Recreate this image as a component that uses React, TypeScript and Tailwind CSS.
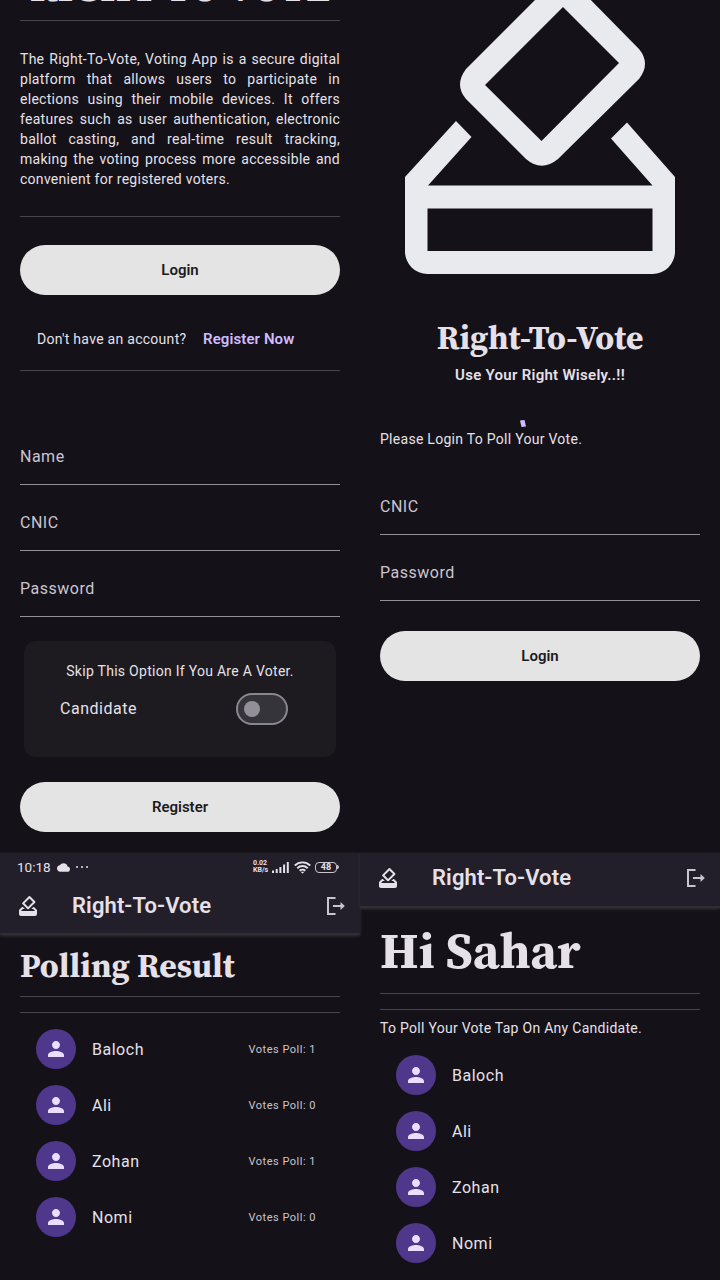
import { MdHowToVote, MdPerson, MdCloud } from "react-icons/md";

const serif = "font-['Source_Serif_4','Source_Serif_Pro','Liberation_Serif',serif] font-bold text-[#e6e0e9]";

function Rule({ className = "" }: { className?: string }) {
  return <div className={`h-px bg-[#48454e] ${className}`} />;
}

function PillButton({ label }: { label: string }) {
  return (
    <button className="flex h-[50px] w-full shrink-0 items-center justify-center rounded-full bg-[#e4e4e4] pt-px text-[15px] font-semibold text-[#1c1b1f]">
      {label}
    </button>
  );
}

function Field({ label }: { label: string }) {
  return (
    <div className="flex h-[66px] items-end border-b border-[#938f99] pb-[15px] text-base leading-6 tracking-[0.5px] text-[#cac4d0]">
      {label}
    </div>
  );
}

function LogoutIcon() {
  return (
    <svg width="20" height="20" viewBox="0 0 20 20" fill="none" stroke="#cac4d0" strokeWidth="2">
      <path d="M9.5 2H2v16h7.5M7 10h8" />
      <path d="M14.5 6l4.300 4-4.300 4z" fill="#cac4d0" stroke="none" />
    </svg>
  );
}

function AppBar() {
  return (
    <div className="flex h-[56px] items-center pl-4 pr-[14px] text-[#e6e0e9]">
      <MdHowToVote size={24} />
      <h1 className="ml-8 flex-1 text-[22px] font-semibold leading-7 tracking-[0.1px]">Right-To-Vote</h1>
      <LogoutIcon />
    </div>
  );
}

function StatusBar() {
  return (
    <div className="flex h-[25px] items-center pl-[17px] pr-[21px] pt-[3px] text-[#e6e0e9]">
      <span className="text-[13.5px]">10:18</span>
      <MdCloud size={13} className="ml-[6px]" />
      <span className="ml-[6px] flex gap-[3px]">
        <i className="size-[2px] rounded-full bg-[#e6e0e9]" />
        <i className="size-[2px] rounded-full bg-[#e6e0e9]" />
        <i className="size-[2px] rounded-full bg-[#e6e0e9]" />
      </span>
      <span className="ml-auto w-[16px] text-[7px] font-bold leading-[7px]">
        0.02
        <br />
        KB/s
      </span>
      <svg className="ml-[3px]" width="17" height="12" viewBox="0 0 17 12" fill="currentColor">
        <path d="M0 9.500h2V12H0zM3.700 8h2v4h-2zM7.400 6h2v6h-2zM11.100 3.500h2V12h-2zM14.800 1h2v11h-2z" />
      </svg>
      <svg className="ml-[5px]" width="17" height="13" viewBox="0 0 17 13" fill="none" stroke="currentColor" strokeWidth="1.9">
        <path d="M.8 4.500a11 11 0 0 1 15.400 0M3.300 7.200a7.400 7.400 0 0 1 10.400 0M5.700 9.800a4 4 0 0 1 5.600 0" />
        <path d="M6.700 10.800h3.600L8.500 12.800z" fill="currentColor" stroke="none" />
      </svg>
      <span className="ml-[4px] flex h-[11px] w-[22px] items-center justify-center rounded-[4px] border border-[#cac4d0] text-[9px] font-bold leading-none">
        48
      </span>
      <i className="h-[4px] w-[2px] rounded-r bg-[#cac4d0]" />
    </div>
  );
}

function Candidate({ name, votes }: { name: string; votes?: number }) {
  return (
    <li className="flex h-14 items-center px-4">
      <span className="flex size-10 items-center justify-center rounded-full bg-[#4f378b] text-[#eaddff]">
        <MdPerson size={24} />
      </span>
      <span className="ml-4 flex-1 pt-px text-base tracking-[0.52px] text-[#e6e0e9]">{name}</span>
      {votes !== undefined && (
        <span className="mr-2 pt-[2px] text-[11px] tracking-[0.5px] text-[#cac4d0]">Votes Poll: {votes}</span>
      )}
    </li>
  );
}

function Welcome() {
  return (
    <section className="flex h-[371px] flex-col px-5">
      <div className="-mx-5 h-[20px] overflow-hidden">
        <div className={`${serif} -mt-[38px] whitespace-nowrap text-center text-[40.8px] leading-[50px]`}>RIGHT TO VOTE</div>
      </div>
      <Rule />
      <p className="mt-7 h-[140px] text-justify text-[14px] leading-5 tracking-[0.28px]">
        The Right-To-Vote, Voting App is a secure digital platform that allows users to participate in elections using
        their mobile devices. It offers features such as user authentication, electronic ballot casting, and real-time
        result tracking, making the voting process more accessible and convenient for registered voters.
      </p>
      <Rule className="mt-[27px]" />
      <div className="mt-[27.5px]">
        <PillButton label="Login" />
      </div>
      <div className="mt-[34.5px] flex h-5 items-center pl-[17px] text-[14px] tracking-[0.28px]">
        <span className="w-[149px] whitespace-nowrap">Don't have an account?</span>
        <a className="ml-[17px] text-[15px] font-semibold tracking-[0.1px] text-[#d0bcff]">Register Now</a>
      </div>
      <Rule className="mt-[21px]" />
    </section>
  );
}

function Register() {
  return (
    <section className="flex h-[482px] flex-col px-5 pt-[48px]">
      <Field label="Name" />
      <Field label="CNIC" />
      <Field label="Password" />
      <div className="mx-1 mt-6 h-[116px] rounded-xl bg-[#1d1b20] pt-5">
        <p className="text-center text-[14px] leading-5 tracking-[0.28px]">Skip This Option If You Are A Voter.</p>
        <div className="mt-3 flex h-8 items-center justify-between pl-9 pr-12">
          <span className="text-base tracking-[0.52px]">Candidate</span>
          <span className="flex h-8 w-[52px] items-center rounded-full border-2 border-[#8a8690] bg-[#36343b] pl-[6px]">
            <i className="size-4 rounded-full bg-[#938f99]" />
          </span>
        </div>
      </div>
      <div className="mt-[24.5px]">
        <PillButton label="Register" />
      </div>
    </section>
  );
}

function LoginScreen() {
  return (
    <section className="flex h-[853px] flex-col">
      <svg className="shrink-0" width="360" height="300" viewBox="0 0 360 300" fill="#e8eaed" fillRule="evenodd">
        <path d="M187 -12Q203 -28 219 -12L279 49Q291 63.500 279 79L198 159Q181.500 172.500 166 159L106 99Q94 85 106 69ZM203 7L125 85L181.500 141L259 63Z" />
        <path d="M96 121L111.500 137L68 185.500H292.500L251 138.500L267 122.500L315 177V251.500A22.500 22.500 0 0 1 292.500 274H67.500A22.500 22.500 0 0 1 45 251.500V177ZM67.500 208.500V251H292.500V208.500Z" />
      </svg>
      <div className="flex flex-col px-5">
        <h1 className={`${serif} mt-[17px] text-center text-[33.4px] leading-10`}>Right-To-Vote</h1>
        <p className="mt-[8px] text-center text-[15px] font-semibold leading-5 tracking-[0.28px]">Use Your Right Wisely..!!</p>
        <div className="mt-[33px] flex h-[10px] items-center pl-[140px]">
          <svg width="6" height="7" viewBox="0 0 6 7">
            <path d="M0 .5L4.500 0L6 6.500L1.500 7Z" fill="#d0bcff" />
          </svg>
        </div>
        <p className="mt-px text-[14px] leading-5 tracking-[0.28px]">Please Login To Poll Your Vote.</p>
        <div className="mt-[20px]">
          <Field label="CNIC" />
          <Field label="Password" />
        </div>
        <div className="mt-[30px]">
          <PillButton label="Login" />
        </div>
      </div>
    </section>
  );
}

function Results() {
  return (
    <section>
      <header className="h-[82px] border-b-2 border-[#302d34] bg-[#231f2a] shadow-[0_1px_3px_#353238]">
        <StatusBar />
        <AppBar />
      </header>
      <div className="px-5">
        <h2 className={`${serif} mt-[10px] text-[33.5px] leading-10`}>Polling Result</h2>
        <Rule className="mt-[11px]" />
        <Rule className="mt-[15px]" />
        <ul className="mt-2">
          <Candidate name="Baloch" votes={1} />
          <Candidate name="Ali" votes={0} />
          <Candidate name="Zohan" votes={1} />
          <Candidate name="Nomi" votes={0} />
        </ul>
      </div>
    </section>
  );
}

function Poll() {
  return (
    <section>
      <header className="flex h-[55px] items-center border-b-2 border-[#302d34] bg-[#231f2a] pb-[3px] shadow-[0_1px_3px_#353238]">
        <div className="w-full">
          <AppBar />
        </div>
      </header>
      <div className="px-5">
        <h2 className={`${serif} mt-[15px] text-[50.5px] leading-[56px]`}>Hi Sahar</h2>
        <Rule className="mt-[14px]" />
        <Rule className="mt-[15px]" />
        <p className="mt-2 text-[14px] leading-5 tracking-[0.28px]">To Poll Your Vote Tap On Any Candidate.</p>
        <ul className="mt-[9px]">
          <Candidate name="Baloch" />
          <Candidate name="Ali" />
          <Candidate name="Zohan" />
          <Candidate name="Nomi" />
        </ul>
      </div>
    </section>
  );
}

export default function App() {
  return (
    <main className="grid h-[1280px] w-[720px] grid-cols-2 overflow-hidden bg-[#141218] font-[Roboto,sans-serif] text-[#e6e0e9]">
      <div className="min-w-0">
        <Welcome />
        <Register />
        <Results />
      </div>
      <div className="min-w-0">
        <LoginScreen />
        <Poll />
      </div>
    </main>
  );
}
